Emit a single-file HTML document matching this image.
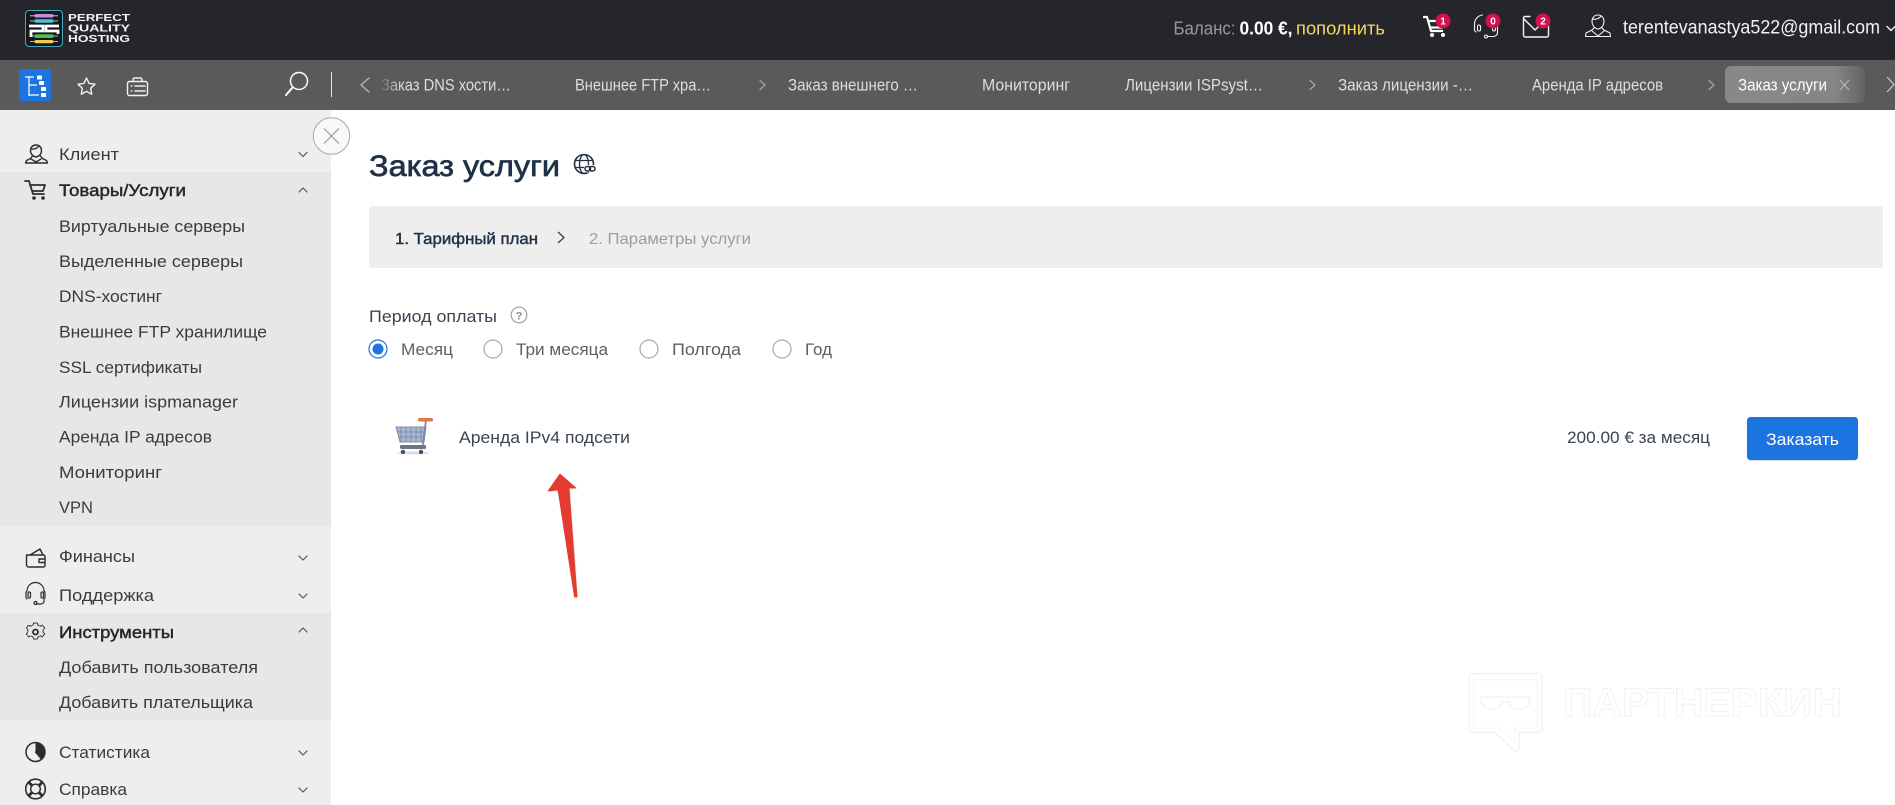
<!DOCTYPE html>
<html><head><meta charset="utf-8"><title>Заказ услуги</title>
<style>
html,body{margin:0;padding:0;background:#fff;width:1895px;height:805px;overflow:hidden}
svg{display:block}
text{font-family:"Liberation Sans","DejaVu Sans",sans-serif;white-space:pre}
.m{font-size:17px;fill:#3a3a40}
.b{font-size:17px;fill:#26262c;stroke:#26262c;stroke-width:.45}
.h{font-size:17px;fill:#dedede}
.c{font-size:16.5px;fill:#3a4552}
.i{fill:none;stroke:#2c2c30;stroke-width:1.4;stroke-linecap:round;stroke-linejoin:round}
.w{fill:none;stroke:#f2f2f2;stroke-width:1.4;stroke-linecap:round;stroke-linejoin:round}
.ch{fill:none;stroke:#55555a;stroke-width:1.2;stroke-linecap:round;stroke-linejoin:round}
.t{fill:none;stroke:#a8a8a8;stroke-width:1.2;stroke-linecap:round;stroke-linejoin:round}
.bd{font-size:10px;font-weight:bold;fill:#fff;text-anchor:middle}
</style></head>
<body>
<svg width="1895" height="805" viewBox="0 0 1895 805" xmlns="http://www.w3.org/2000/svg">
<defs>
<linearGradient id="fade"><stop offset="0" stop-color="#5a5a5a"/><stop offset="1" stop-color="#5a5a5a" stop-opacity="0"/></linearGradient>
<linearGradient id="tab"><stop offset="0" stop-color="#888"/><stop offset=".78" stop-color="#868686"/><stop offset="1" stop-color="#636363"/></linearGradient>
<filter id="soft" x="-20%" y="-10%" width="140%" height="120%"><feGaussianBlur stdDeviation=".5"/></filter>
</defs>
<rect width="1895" height="805" fill="#fff"/>
<!-- top bar -->
<rect width="1895" height="60" fill="#25262b"/>
<rect y="60" width="1895" height="50" fill="#5a5a5a"/>
<!-- logo -->
<rect x="25.500" y="10.500" width="37" height="36" rx="3.500" fill="#15181c" stroke="#45a7b8" stroke-width="1"/>
<path d="M30 15.800h28M30 21h28M30 36h28M30 41.500h28" stroke="#dfe6e8" stroke-width=".8"/>
<rect x="34.500" y="14" width="19" height="3.500" rx="1.500" fill="#c48de0"/>
<rect x="34.500" y="19.300" width="19" height="3.500" rx="1.500" fill="#4cc3dc"/>
<rect x="34.500" y="34.300" width="19" height="3.700" rx="1.500" fill="#4fbe5a"/>
<rect x="34.500" y="40" width="19" height="3.300" rx="1.500" fill="#f2cf4a"/>
<path d="M29 26h14v5H31v6M59 26H46v5h12v3" fill="none" stroke="#fff" stroke-width="2.800"/>
<text x="68" y="21" font-size="9.800" font-weight="bold" fill="#f4f4f4" textLength="62" lengthAdjust="spacingAndGlyphs">PERFECT</text>
<text x="68" y="31.500" font-size="9.800" font-weight="bold" fill="#f4f4f4" textLength="62" lengthAdjust="spacingAndGlyphs">QUALITY</text>
<text x="68" y="42" font-size="9.800" font-weight="bold" fill="#f4f4f4" textLength="62" lengthAdjust="spacingAndGlyphs">HOSTING</text>
<!-- header right -->
<text x="1173.500" y="34.500" font-size="18" fill="#999" textLength="62" lengthAdjust="spacingAndGlyphs">Баланс:</text>
<text x="1239.500" y="34.500" font-size="18" font-weight="bold" fill="#fff" textLength="53" lengthAdjust="spacingAndGlyphs">0.00 €,</text>
<text x="1296" y="34.500" font-size="18" fill="#f3d65f" textLength="89" lengthAdjust="spacingAndGlyphs">пополнить</text>
<!-- cart -->
<path d="M1423 17h4l4 14h12M1429 21h16l-2.500 6.500H1431" fill="none" stroke="#fff" stroke-width="2.200" stroke-linejoin="round"/>
<circle cx="1432" cy="35" r="2" fill="#fff"/><circle cx="1443" cy="35" r="2" fill="#fff"/>
<circle cx="1443" cy="21" r="7.500" fill="#d1124e"/><text x="1443" y="24.500" class="bd">1</text>
<!-- support -->
<path d="M1476 32a3 3 0 0 1-1.500-3v-5a9 9 0 0 1 8-9M1497.500 26v6a4 4 0 0 1-4 4.500h-6" class="w" style="stroke-width:1.100"/>
<rect x="1477.500" y="25" width="3" height="6" rx="1.500" class="w" style="stroke-width:1.100"/>
<rect x="1492.500" y="26" width="3" height="5" rx="1.500" class="w" style="stroke-width:1.100"/>
<circle cx="1486" cy="36.500" r="1.500" class="w" style="stroke-width:1.100"/>
<circle cx="1493" cy="21" r="7.500" fill="#d1124e"/><text x="1493" y="24.500" class="bd">0</text>
<!-- mail -->
<path d="M1530 16.500h-5a1.500 1.500 0 0 0-1.500 1.500v17.500a1.500 1.500 0 0 0 1.500 1.500h22a1.500 1.500 0 0 0 1.500-1.500V25M1524 19l11 11 7-7" class="w"/>
<circle cx="1543" cy="21" r="7.500" fill="#d1124e"/><text x="1543" y="24.500" class="bd">2</text>
<!-- user -->
<path d="M1598 15c4 0 6 3 6 6.500 0 3-2 7-6 7.500-4-.5-6-4.500-6-7.500 0-3.500 2-6.500 6-6.500zM1593 19c3 1 7-1 8-3M1594 28l-2 2-6 3-.5 3.500h25l-.5-3.500-6-3-2-2M1592 31l6 5 6-5" class="w" style="stroke-width:1.100"/>
<text x="1623" y="33.500" font-size="19" fill="#f2f2f2" textLength="257" lengthAdjust="spacingAndGlyphs">terentevanastya522@gmail.com</text>
<path d="M1887 26.500l4 4 4-4" class="w" stroke="#eee"/>
<!-- toolbar icons -->
<rect x="19" y="69" width="32" height="32" rx="3" fill="#1c74e0"/>
<path d="M25 77h9M29 77v19M29 85h8M29 95h10" fill="none" stroke="#fff" stroke-width="1.200"/>
<rect x="37" y="75.500" width="5" height="4" rx=".8" fill="#fff"/>
<rect x="39" y="81" width="5" height="4" rx=".8" fill="#fff"/>
<rect x="41" y="87" width="5" height="4" rx=".8" fill="#fff"/>
<rect x="41" y="93" width="5" height="4" rx=".8" fill="#fff"/>
<path d="M86.500 78l2.600 5.400 5.900.8-4.300 4.100 1 5.900-5.200-2.800-5.200 2.800 1-5.900-4.300-4.100 5.900-.8z" class="w"/>
<rect x="127.500" y="81.500" width="20" height="14" rx="2" class="w"/>
<path d="M133 81.500v-2a1.500 1.500 0 0 1 1.500-1.500h6a1.500 1.500 0 0 1 1.500 1.500v2M135 86h10M135 91h10" class="w"/>
<circle cx="131.500" cy="86" r=".9" fill="#f2f2f2"/><circle cx="131.500" cy="91" r=".9" fill="#f2f2f2"/>
<circle cx="299" cy="81" r="8.500" fill="none" stroke="#fff" stroke-width="1.500"/>
<path d="M292.500 87.500L286 95" stroke="#fff" stroke-width="2" stroke-linecap="round"/>
<rect x="331" y="72" width="1" height="25" fill="#e8e8e8"/>
<!-- tabs -->
<path d="M369 78l-8 7 8 7" fill="none" stroke="#b8b8b8" stroke-width="1.300" stroke-linejoin="round" stroke-linecap="round"/>
<text x="381" y="90.500" class="h" textLength="130" lengthAdjust="spacingAndGlyphs">Заказ DNS хости…</text>
<rect x="378" y="68" width="24" height="32" fill="url(#fade)"/>
<text x="575" y="90.500" class="h" textLength="136" lengthAdjust="spacingAndGlyphs">Внешнее FTP хра…</text>
<path d="M760 80.500l5 4.500-5 4.500" class="t"/>
<text x="788" y="90.500" class="h" textLength="130" lengthAdjust="spacingAndGlyphs">Заказ внешнего …</text>
<text x="982" y="90.500" class="h" textLength="88" lengthAdjust="spacingAndGlyphs">Мониторинг</text>
<text x="1125" y="90.500" class="h" textLength="138" lengthAdjust="spacingAndGlyphs">Лицензии ISPsyst…</text>
<path d="M1310 80.500l5 4.500-5 4.500" class="t"/>
<text x="1338" y="90.500" class="h" textLength="135" lengthAdjust="spacingAndGlyphs">Заказ лицензии -…</text>
<text x="1532" y="90.500" class="h" textLength="131" lengthAdjust="spacingAndGlyphs">Аренда IP адресов</text>
<path d="M1709 80.500l5 4.500-5 4.500" class="t"/>
<rect x="1725" y="66" width="140" height="37" rx="6" fill="url(#tab)"/>
<text x="1738" y="90.500" font-size="17" fill="#fff" textLength="89" lengthAdjust="spacingAndGlyphs">Заказ услуги</text>
<path d="M1840 80l9 10M1849 80l-9 10" stroke="#b8b8b8" stroke-width="1.100"/>
<path d="M1887 77l7 7.500-7 7.500" fill="none" stroke="#c8c8c8" stroke-width="1.200"/>
<!-- sidebar -->
<rect y="110" width="331" height="695" fill="#eeeeee"/>
<rect y="172" width="331" height="354" fill="#e7e7e7"/>
<rect y="613" width="331" height="107" fill="#e7e7e7"/>
<circle cx="331.500" cy="136" r="18.200" fill="#f8f8f8" stroke="#a8a8a8" stroke-width="1"/>
<path d="M324 128.500l15 15M339 128.500l-15 15" stroke="#9a9a9a" stroke-width="1.100"/>

<!-- sidebar icons -->
<path d="M36 145c3.500 0 5.500 2.500 5.500 5.500s-2 6-5.500 6.500c-3.500-.5-5.500-3.500-5.500-6.500s2-5.500 5.500-5.500zM31.500 149c3 .5 6-1 7.500-3M32.500 156l-2 2.500-4 2-1 2.500h22l-1-2.500-4-2-2-2.500M31 159l5 3 5-3" class="i"/>
<path d="M25 181h4l4 13h11M30 185h15l-2 6H32" class="i" style="stroke-width:1.800"/><circle cx="34" cy="198" r="1.800" fill="#2c2c30"/><circle cx="43" cy="198" r="1.800" fill="#2c2c30"/>
<path d="M30 555l10-6 3 6M26.500 555h17a1.500 1.500 0 0 1 1.500 1.500v9a1.500 1.500 0 0 1-1.500 1.500h-15a2 2 0 0 1-2-2v-8.500a1.500 1.500 0 0 1 1.500-1.500zM45 559h-6v3.500h6" class="i"/>
<path d="M27 599a2 2 0 0 1-1-2v-4a2 2 0 0 1 1-2 8.500 8.500 0 0 1 17 0 2 2 0 0 1 1 2v4a2 2 0 0 1-1 2v2a3 3 0 0 1-3 3h-5" class="i" style="stroke-width:1.200"/><rect x="28" y="592" width="2.500" height="6" rx="1.200" class="i" style="stroke-width:1.200"/><rect x="41" y="592" width="2.500" height="6" rx="1.200" class="i" style="stroke-width:1.200"/><circle cx="35.500" cy="603" r="1.500" class="i" style="stroke-width:1.200"/>
<circle cx="35.500" cy="632" r="2.500" class="i" style="stroke-width:1.800"/>
<path d="M33.500 623h4l.6 2.300 2.300.9 2-1.100 2.200 3-1.500 1.800v2.200l1.500 1.800-2.200 3-2-1.100-2.300.9-.6 2.300h-4l-.6-2.300-2.300-.9-2 1.100-2.200-3 1.500-1.800v-2.200l-1.500-1.800 2.200-3 2 1.100 2.300-.9z" class="i" stroke-dasharray="3 1.200" style="stroke-width:1"/>
<circle cx="35.500" cy="752" r="9.500" class="i" style="stroke-width:1.500"/>
<path d="M35.500 742.500a9.500 9.500 0 0 1 5.500 17L35.500 752z" fill="#2c2c30"/>
<path d="M35.500 752l6 7" class="i"/>
<circle cx="35.500" cy="789" r="9.800" class="i" style="stroke-width:1.600"/><circle cx="35.500" cy="789" r="4.800" class="i" style="stroke-width:1.400"/>
<path d="M28.500 782l3.600 3.600M42.500 782l-3.600 3.600M28.500 796l3.600-3.600M42.500 796l-3.600-3.600" stroke="#2c2c30" stroke-width="2.800"/>

<!-- sidebar text -->
<text x="59" y="160" class="m" textLength="60" lengthAdjust="spacingAndGlyphs">Клиент</text>
<text x="59" y="196" class="b" textLength="127" lengthAdjust="spacingAndGlyphs">Товары/Услуги</text>
<text x="59" y="232" class="m" textLength="186" lengthAdjust="spacingAndGlyphs">Виртуальные серверы</text>
<text x="59" y="267" class="m" textLength="184" lengthAdjust="spacingAndGlyphs">Выделенные серверы</text>
<text x="59" y="302" class="m" textLength="103" lengthAdjust="spacingAndGlyphs">DNS-хостинг</text>
<text x="59" y="337.500" class="m" textLength="208" lengthAdjust="spacingAndGlyphs">Внешнее FTP хранилище</text>
<text x="59" y="373" class="m" textLength="143" lengthAdjust="spacingAndGlyphs">SSL сертификаты</text>
<text x="59" y="407.500" class="m" textLength="179" lengthAdjust="spacingAndGlyphs">Лицензии ispmanager</text>
<text x="59" y="442.500" class="m" textLength="153" lengthAdjust="spacingAndGlyphs">Аренда IP адресов</text>
<text x="59" y="478" class="m" textLength="103" lengthAdjust="spacingAndGlyphs">Мониторинг</text>
<text x="59" y="513" class="m" textLength="34" lengthAdjust="spacingAndGlyphs">VPN</text>
<text x="59" y="562" class="m" textLength="76" lengthAdjust="spacingAndGlyphs">Финансы</text>
<text x="59" y="601" class="m" textLength="95" lengthAdjust="spacingAndGlyphs">Поддержка</text>
<text x="59" y="638" class="b" textLength="115" lengthAdjust="spacingAndGlyphs">Инструменты</text>
<text x="59" y="673" class="m" textLength="199" lengthAdjust="spacingAndGlyphs">Добавить пользователя</text>
<text x="59" y="708" class="m" textLength="194" lengthAdjust="spacingAndGlyphs">Добавить плательщика</text>
<text x="59" y="758" class="m" textLength="91" lengthAdjust="spacingAndGlyphs">Статистика</text>
<text x="59" y="795" class="m" textLength="68" lengthAdjust="spacingAndGlyphs">Справка</text>
<!-- sidebar chevrons -->
<path d="M299 152.500l4 4 4-4M299 192l4-4 4 4M299 556l4 4 4-4M299 594l4 4 4-4M299 632l4-4 4 4M299 751l4 4 4-4M299 788l4 4 4-4" class="ch"/>

<!-- main -->
<text x="369" y="176" font-size="30" fill="#1f3248" stroke="#1f3248" stroke-width=".7" textLength="191" lengthAdjust="spacingAndGlyphs">Заказ услуги</text>
<circle cx="584" cy="164" r="9.500" fill="none" stroke="#22303f" stroke-width="1.600"/>
<ellipse cx="584" cy="164" rx="4.500" ry="9.500" fill="none" stroke="#22303f" stroke-width="1.300"/>
<path d="M575 160.500h18M575 167.500h18" stroke="#22303f" stroke-width="1.300"/>
<rect x="584" y="165" width="13" height="7.500" rx="3" fill="#fff"/>
<rect x="585" y="166.500" width="5.500" height="4.500" rx="2.200" fill="none" stroke="#22303f" stroke-width="1.500"/>
<rect x="589.500" y="166.500" width="5.500" height="4.500" rx="2.200" fill="none" stroke="#22303f" stroke-width="1.500"/>

<rect x="369" y="206" width="1514" height="62" rx="3" fill="#eeeeee"/>
<text x="395" y="244" font-size="16" fill="#1f3248" stroke="#1f3248" stroke-width=".45" textLength="143" lengthAdjust="spacingAndGlyphs">1. Тарифный план</text>
<path d="M558 232l6 5.500-6 5.500" fill="none" stroke="#33373d" stroke-width="1.200"/>
<text x="589" y="244" font-size="16" fill="#9c9c9c" textLength="162" lengthAdjust="spacingAndGlyphs">2. Параметры услуги</text>

<text x="369" y="322" class="c" textLength="128" lengthAdjust="spacingAndGlyphs">Период оплаты</text>
<circle cx="519" cy="315" r="7.800" fill="none" stroke="#a0a0a0" stroke-width="1.200"/>
<text x="519" y="319.500" font-size="11" font-weight="bold" fill="#888" text-anchor="middle">?</text>

<circle cx="378" cy="349" r="9" fill="#fff" stroke="#1c74e0" stroke-width="1.200"/><circle cx="378" cy="349" r="5.500" fill="#1c74e0"/>
<text x="401" y="355" class="c" style="fill:#5a6068" textLength="52" lengthAdjust="spacingAndGlyphs">Месяц</text>
<circle cx="493" cy="349" r="9" fill="#fff" stroke="#a8a8a8" stroke-width="1.200"/>
<text x="516" y="355" class="c" style="fill:#5a6068" textLength="92" lengthAdjust="spacingAndGlyphs">Три месяца</text>
<circle cx="649" cy="349" r="9" fill="#fff" stroke="#a8a8a8" stroke-width="1.200"/>
<text x="672" y="355" class="c" style="fill:#5a6068" textLength="69" lengthAdjust="spacingAndGlyphs">Полгода</text>
<circle cx="782" cy="349" r="9" fill="#fff" stroke="#a8a8a8" stroke-width="1.200"/>
<text x="805" y="355" class="c" style="fill:#5a6068" textLength="27" lengthAdjust="spacingAndGlyphs">Год</text>

<!-- cart image -->
<path d="M396 427h30l-2 15h-24z" fill="#a9b8d0" stroke="#7c90ad" stroke-width="1"/>
<path d="M401 427v15M406 427v15M411 427v15M416 427v15M421 427v15M397 432h28M398 437h27" stroke="#6f84a3" stroke-width=".8"/>
<path d="M426 420l-3.500 27h-22" fill="none" stroke="#7d8aa0" stroke-width="1.800"/>
<rect x="418" y="418" width="15" height="3.500" rx="1.500" fill="#e0774a"/>
<rect x="400" y="445" width="26" height="4" rx="1.500" fill="#6a7688"/>
<ellipse cx="413" cy="453" rx="16" ry="1.500" fill="#ddd"/>
<circle cx="403" cy="452" r="2.200" fill="#4a4f58"/><circle cx="421" cy="452" r="2.200" fill="#4a4f58"/>

<text x="459" y="443" class="c" textLength="171" lengthAdjust="spacingAndGlyphs">Аренда IPv4 подсети</text>
<!-- arrow -->
<path d="M560 474L576 488L569 488L577 597L574.500 597L558 490L548 491z" fill="#bbb" opacity=".5" transform="translate(1,1)" filter="url(#soft)"/>
<path d="M560 474L576 488L569 488L577 597L574.500 597L558 490L548 491z" fill="#e33b30" stroke="#e33b30" stroke-width=".8" stroke-linejoin="round"/>

<text x="1567" y="443" class="c" textLength="143" lengthAdjust="spacingAndGlyphs">200.00 € за месяц</text>
<rect x="1747" y="418" width="111" height="43" rx="3.500" fill="#bbb" opacity=".5"/>
<rect x="1747" y="417" width="111" height="43" rx="3.500" fill="#1c74e0"/>
<text x="1766" y="445" font-size="16.500" fill="#fff" textLength="73" lengthAdjust="spacingAndGlyphs">Заказать</text>

<!-- watermark -->
<path d="M1473 673.500h65a4 4 0 0 1 4 4v51a4 4 0 0 1-4 4h-19v16a3 3 0 0 1-5 2l-19-18h-22a4 4 0 0 1-4-4v-51a4 4 0 0 1 4-4z" fill="none" stroke="#f0f0f0" stroke-width="1.300"/>
<path d="M1475.500 680h60a2 2 0 0 1 2 2v44a2 2 0 0 1-2 2h-21v14l-16-14h-23a2 2 0 0 1-2-2v-44a2 2 0 0 1 2-2z" fill="none" stroke="#f5f5f5" stroke-width="1"/>
<path d="M1481 697h49v3a9 9 0 0 1-9 9h-4a8 8 0 0 1-8-7h-7a8 8 0 0 1-8 7h-4a9 9 0 0 1-9-9z" fill="none" stroke="#f0f0f0" stroke-width="1.200"/>
<text x="1563" y="716" font-size="40" font-weight="bold" fill="#fff" stroke="#efefef" stroke-width=".8" textLength="279" lengthAdjust="spacingAndGlyphs">ПАРТНЕРКИН</text>
</svg>
</body></html>
